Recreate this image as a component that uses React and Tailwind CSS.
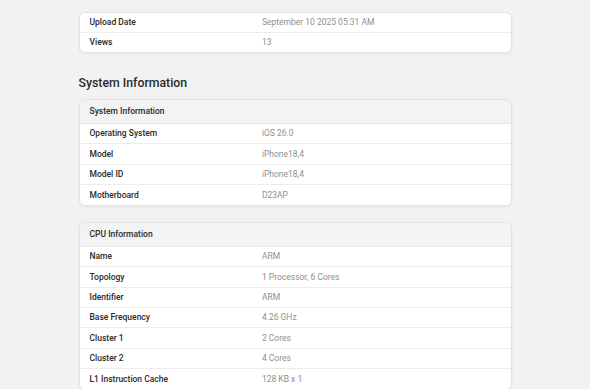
import React from 'react';

const uploadRows = [
  ['Upload Date', 'September 10 2025 05:31 AM'],
  ['Views', '13'],
];

const systemRows = [
  ['Operating System', 'iOS 26.0'],
  ['Model', 'iPhone18,4'],
  ['Model ID', 'iPhone18,4'],
  ['Motherboard', 'D23AP'],
];

const cpuRows = [
  ['Name', 'ARM'],
  ['Topology', '1 Processor, 6 Cores'],
  ['Identifier', 'ARM'],
  ['Base Frequency', '4.26 GHz'],
  ['Cluster 1', '2 Cores'],
  ['Cluster 2', '4 Cores'],
  ['L1 Instruction Cache', '128 KB x 1'],
];

const Row = ({ label, value, last, h }) => (
  <div className={`grid grid-cols-[40%_60%] ${h} items-center ${last ? '' : 'border-b border-[#ececec]'}`}>
    <div className="pl-[10px] text-[8.5px] font-medium text-[#2a2a2a]">{label}</div>
    <div className="pl-[10px] text-[8.5px] text-[#8f8f8f]">{value}</div>
  </div>
);

const Card = ({ title, rows, rowH = 'h-[20.3px]' }) => (
  <div className="bg-white border border-[#e3e3e3] rounded-[6px] shadow-[0_1px_3px_rgba(0,0,0,0.06)] overflow-hidden">
    {title && (
      <div className="h-[24px] flex items-center pl-[10px] bg-[#f3f3f3] border-b border-[#e8e8e8] text-[8.5px] font-medium text-[#2a2a2a]">
        {title}
      </div>
    )}
    {rows.map(([label, value], i) => (
      <Row key={label} label={label} value={value} h={rowH} last={i === rows.length - 1} />
    ))}
  </div>
);

export default function App() {
  return (
    <div className="min-h-screen bg-[#f2f2f2] font-['Roboto',sans-serif] pt-[12px]">
      <div className="w-[433px] mx-auto">
        <Card rows={uploadRows} rowH="h-[19.5px]" />
        <h2 className="mt-[22px] mb-[8px] text-[12.3px] leading-[16px] font-medium text-[#2b2b2b]">
          System Information
        </h2>
        <Card title="System Information" rows={systemRows} />
        <div className="mt-[16px]">
          <Card title="CPU Information" rows={cpuRows} />
        </div>
      </div>
    </div>
  );
}
